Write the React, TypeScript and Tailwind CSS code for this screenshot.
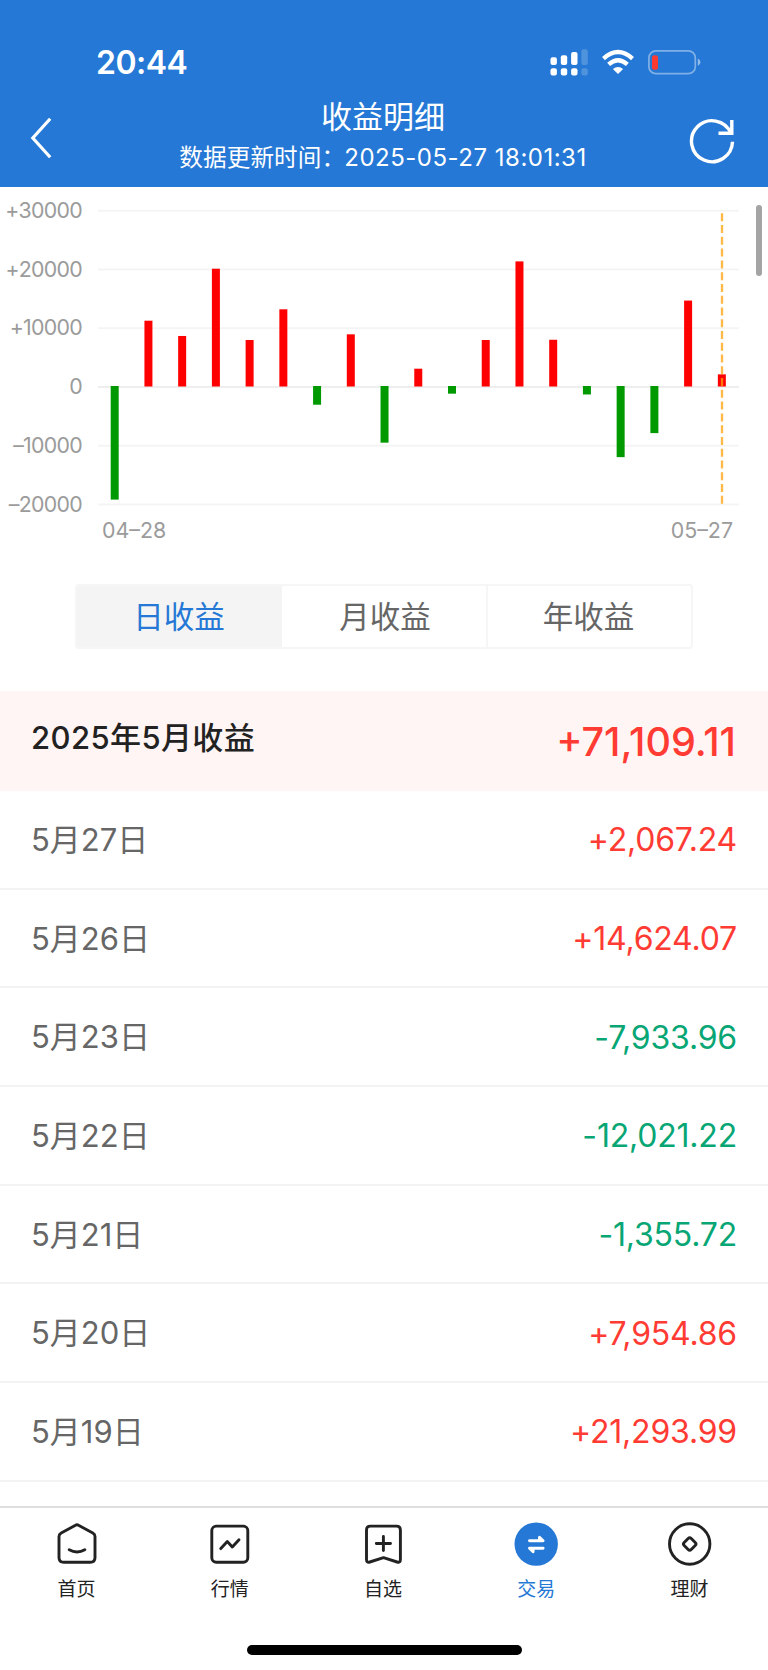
import React from 'react'

const bars = [
    -19250, 11200, 8600, 20050, 7915, 13140, -3100, 8880, -9560, 3030,
    -1220, 7915, 21293.99, 7954.86, -1355.72, -12021.22, -7933.96, 14624.07, 2067.24
]

const axis = ['+30000', '+20000', '+10000', '0', '–10000', '–20000']

const rows = [
    { date: '5月27日', amount: '+2,067.24' },
    { date: '5月26日', amount: '+14,624.07' },
    { date: '5月23日', amount: '-7,933.96' },
    { date: '5月22日', amount: '-12,021.22' },
    { date: '5月21日', amount: '-1,355.72' },
    { date: '5月20日', amount: '+7,954.86' },
    { date: '5月19日', amount: '+21,293.99' }
]

const STEP = 58.75
const ZERO = 199.5

function StatusIcons() {
    return (
        <svg className="w-[152px] h-[32px]" viewBox="550 46 152 32" fill="none">
            <g fill="#fff">
                <rect x="550.5" y="57.3" width="6.4" height="7.8" rx="2" />
                <rect x="560.8" y="55.3" width="6.4" height="9.8" rx="2" />
                <rect x="571.1" y="52" width="6.4" height="13.1" rx="2" />
                <rect x="581.4" y="49.2" width="6.4" height="15.9" rx="2" opacity="0.2" />
                <rect x="550.5" y="68.3" width="6.4" height="7.1" rx="2" />
                <rect x="560.8" y="68.3" width="6.4" height="7.1" rx="2" />
                <rect x="571.1" y="68.3" width="6.4" height="7.1" rx="2" />
                <rect x="581.4" y="68.3" width="6.4" height="7.1" rx="2" opacity="0.2" />
                <path d="M618 74 L612.9 69 Q618 64.8 623.1 69 Z" />
            </g>
            <path d="M603.5 58.6 Q618 45.6 632.5 58.6" stroke="#fff" strokeWidth="4.3" />
            <path d="M608.6 64.3 Q618 56 627.4 64.3" stroke="#fff" strokeWidth="4.3" />
            <rect x="648.9" y="50.9" width="46.4" height="22.8" rx="7" stroke="#fff" strokeWidth="1.7" opacity="0.42" />
            <rect x="652" y="55.2" width="6" height="14.6" rx="2.6" fill="#ff3a30" />
            <path d="M697.8 58.6 Q700.4 59.8 700.4 62.3 Q700.4 64.8 697.8 66 Z" fill="#fff" opacity="0.5" />
        </svg>
    )
}

function Header() {
    return (
        <header className="h-[187px] bg-[#2578d5] text-white">
            <div className="flex items-center justify-between h-[78px] pt-[46px] pl-[96px] pr-[66px]">
                <span className="pt-[2px] text-[32px] leading-[32px] font-semibold tracking-[-0.5px]">20:44</span>
                <StatusIcons />
            </div>
            <div className="flex justify-between pl-[30px] pr-[32px]">
                <svg className="w-[24px] h-[48px] mt-[36px]" viewBox="30 114 24 48" fill="none">
                    <path d="M50.2 118.8 L32.8 138 L50.2 157.2" stroke="#fff" strokeWidth="3.2" />
                </svg>
                <div className="flex flex-col items-center pt-[19px] pl-[24px]">
                    <h1 className="text-[31px] leading-[40px] font-normal">收益明细</h1>
                    <p className="flex text-[23.6px] leading-[41px] whitespace-nowrap">
                        <span className="w-[165px] tracking-[0.1px]">数据更新时间：</span>
                        <span className="text-[24px] tracking-[0.5px]">2025-05-27 18:01:31</span>
                    </p>
                </div>
                <svg className="w-[48px] h-[48px] mt-[39px]" viewBox="688 117 48 48" fill="none">
                    <path d="M732.5 141.8 A20.5 20.5 0 1 1 730.8 133" stroke="#fff" strokeWidth="3.4" />
                    <path d="M731.8 120 V133.2 H718.5" stroke="#fff" strokeWidth="3.4" />
                </svg>
            </div>
        </header>
    )
}

function ProfitChart() {
    return (
        <svg className="block w-[768px] h-[397px]" viewBox="0 0 768 397">
            {axis.map((label, i) => (
                <g key={label}>
                    <rect x="98" y={22.8 + i * STEP} width="641" height="1.8" fill={label === '0' ? '#ededed' : '#f4f4f4'} />
                    <text x="82" y={30.8 + i * STEP} textAnchor="end" className="text-[21.3px] tracking-[-0.7px] [font-kerning:none]" fill="#9b9b9b">{label}</text>
                </g>
            ))}
            {bars.map((v, i) => {
                const h = Math.abs(v) / 10000 * STEP
                return (
                    <rect
                        key={i}
                        x={110.7 + i * 33.73}
                        y={v > 0 ? ZERO - h : ZERO - 0.5}
                        width="8"
                        height={v > 0 ? h : h + 0.5}
                        fill={v > 0 ? '#ff0000' : '#009900'}
                    />
                )
            })}
            <line x1="722" y1="26.3" x2="722" y2="317" stroke="#ffa10a" strokeOpacity="0.75" strokeWidth="2.3" strokeDasharray="8 3.77" />
            <text x="102" y="351.2" className="text-[21.4px]" fill="#9b9b9b">04–28</text>
            <text x="733" y="351.2" textAnchor="end" className="text-[21.4px]" fill="#9b9b9b">05–27</text>
            <rect x="756" y="18" width="6" height="71" rx="3" fill="#a4a4a4" />
        </svg>
    )
}

function PeriodTabs() {
    return (
        <div className="mx-auto flex w-[618px] h-[65px] rounded-[4px] border-2 border-[#f6f6f6] overflow-hidden text-[30.5px] text-[#666]">
            <button className="w-[205px] pr-[1px] bg-[#f4f4f4] text-[#2578d5] leading-[57px]">日收益</button>
            <button className="w-[206px] pl-[2px] border-r-2 border-[#f6f6f6] leading-[57px]">月收益</button>
            <button className="flex-1 pr-[2px] leading-[57px]">年收益</button>
        </div>
    )
}

const tabs = [
    {
        name: '首页',
        icon: (
            <path d="M22.5 5.3 Q24 4.3 25.5 5.3 L39.8 13 Q42 14.2 42 16.4 V37.5 Q42 42.3 37.2 42.3 H10.8 Q6 42.3 6 37.5 V16.4 Q6 14.2 8.2 13 Z M16.2 29.7 Q24 34.2 31.8 29.7" />
        )
    },
    {
        name: '行情',
        icon: (
            <>
                <rect x="5.8" y="6.1" width="36" height="36.2" rx="4.5" />
                <path d="M14.8 28.6 L21.3 21.6 L26.3 26.9 L33 19.7" />
            </>
        )
    },
    {
        name: '自选',
        icon: (
            <path d="M11.5 6.1 H37.5 Q41.4 6.1 41.4 10 V39.5 Q41.4 43 38.1 42 L24.5 37.7 L10.8 42 Q7.5 43 7.5 39.5 V10 Q7.5 6.1 11.5 6.1 Z M17.3 23.5 H31.5 M24.4 16.4 V30.6" />
        )
    },
    {
        name: '交易',
        icon: (
            <>
                <circle cx="24.2" cy="24.1" r="21.7" fill="#2578d5" stroke="none" />
                <path d="M17.5 20.7 H31.1 L27.5 17.2 V20.7 M31.1 28.2 H17.5 L21.1 31.7 V28.2" stroke="#fff" />
            </>
        )
    },
    {
        name: '理财',
        icon: (
            <>
                <circle cx="24.7" cy="24" r="20.2" />
                <rect x="19.7" y="19" width="10" height="10" rx="2.2" transform="rotate(45 24.7 24)" />
            </>
        )
    }
]

function TabBar() {
    return (
        <nav className="h-[164px] border-t-2 border-[#dedede] bg-white">
            <div className="grid grid-cols-5 w-[766px] pt-[12px]">
                {tabs.map((tab) => (
                    <div key={tab.name} className={tab.name === '交易' ? 'flex flex-col items-center text-[#2578d5]' : 'flex flex-col items-center text-[#222]'}>
                        <svg className="w-[48px] h-[48px]" viewBox="0 0 48 48" fill="none" stroke="currentColor" strokeWidth="2.9" strokeLinecap="round" strokeLinejoin="round">
                            {tab.icon}
                        </svg>
                        <span className="mt-[10px] text-[19px] leading-[24px]">{tab.name}</span>
                    </div>
                ))}
            </div>
            <div className="mx-auto mt-[43px] w-[275px] h-[9.5px] rounded-full bg-black"></div>
        </nav>
    )
}

export default function App() {
    return (
        <div className="flex flex-col w-[768px] h-[1670px] overflow-hidden bg-white font-[Inter,'Noto_Sans_CJK_SC',sans-serif]">
            <Header />
            <ProfitChart />
            <PeriodTabs />
            <div className="mt-[42px] flex items-center justify-between h-[100px] shrink-0 pl-[31px] pr-[32px] bg-[#fff5f4] font-medium">
                <span className="text-[31px] leading-[40px] pb-[6px] tracking-[0.4px] text-[#222]">2025年5月收益</span>
                <span className="text-[39.5px] leading-[40px] pt-[1px] text-[#ff3b33]">+71,109.11</span>
            </div>
            <ul className="flex-1 overflow-hidden">
                {rows.map((row) => (
                    <li key={row.date} className="flex items-center justify-between h-[98.67px] pt-[2px] pl-[31px] pr-[31px] border-b-2 border-[#f3f3f3]">
                        <span className="text-[31px] text-[#666]">{row.date}</span>
                        <span className={row.amount[0] === '+' ? 'text-[32px] tracking-[-0.2px] text-[#ff3b33]' : 'text-[32px] tracking-[-0.2px] text-[#07a674]'}>{row.amount}</span>
                    </li>
                ))}
            </ul>
            <TabBar />
        </div>
    )
}
